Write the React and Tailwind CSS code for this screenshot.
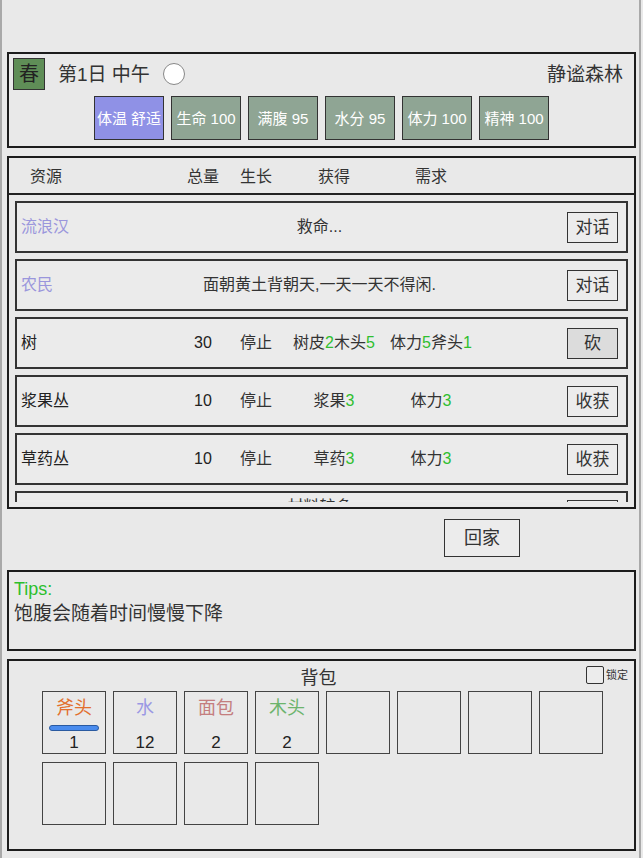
import React from 'react';

const stats = [
  { label: '体温 舒适', bg: 'bg-[#8f91e6]' },
  { label: '生命 100', bg: 'bg-[#8fa594]' },
  { label: '满腹 95', bg: 'bg-[#8fa594]' },
  { label: '水分 95', bg: 'bg-[#8fa594]' },
  { label: '体力 100', bg: 'bg-[#8fa594]' },
  { label: '精神 100', bg: 'bg-[#8fa594]' },
];

const G = ({ children }) => <span className="text-[#2fbf2f]">{children}</span>;

const resources = [
  { name: '树', qty: 30, grow: '停止', get: <>树皮<G>2</G>木头<G>5</G></>, need: <>体力<G>5</G>斧头<G>1</G></>, action: '砍', dark: true },
  { name: '浆果丛', qty: 10, grow: '停止', get: <>浆果<G>3</G></>, need: <>体力<G>3</G></>, action: '收获' },
  { name: '草药丛', qty: 10, grow: '停止', get: <>草药<G>3</G></>, need: <>体力<G>3</G></>, action: '收获' },
];

const items = [
  { name: '斧头', color: 'text-[#e2702f]', count: 1, bar: true },
  { name: '水', color: 'text-[#9a98e4]', count: 12 },
  { name: '面包', color: 'text-[#c47e7e]', count: 2 },
  { name: '木头', color: 'text-[#6db46d]', count: 2 },
];

const Btn = ({ children, dark }) => (
  <button className={`w-[51px] h-[31px] border-[1.5px] border-[#333] text-[17px] leading-none text-[#333] ${dark ? 'bg-[#dcdcdc]' : 'bg-[#ececec]'}`}>
    {children}
  </button>
);

const NpcRow = ({ name, text }) => (
  <div className="shrink-0 h-[52px] border-2 border-[#333] bg-[#ebebeb] grid grid-cols-[1fr_auto_1fr] items-center pl-[4px] pr-[8px] text-[16px]">
    <span className="text-[#9a96dc]">{name}</span>
    <span>{text}</span>
    <div className="flex justify-end">
      <Btn>对话</Btn>
    </div>
  </div>
);

const ResRow = ({ r }) => (
  <div className="shrink-0 h-[52px] border-2 border-[#333] bg-[#ebebeb] flex items-center pl-[4px] pr-[8px] text-[16px]">
    <span className="w-[162px] text-[#222]">{r.name}</span>
    <span className="w-[40px] text-center text-[#222]">{r.qty}</span>
    <span className="w-[66px] text-center">{r.grow}</span>
    <span className="w-[90px] text-center">{r.get}</span>
    <span className="w-[104px] text-center">{r.need}</span>
    <div className="flex-1 flex justify-end">
      <Btn dark={r.dark}>{r.action}</Btn>
    </div>
  </div>
);

export default function App() {
  return (
    <div className="w-[643px] h-[858px] bg-[#e9e9e9] overflow-hidden text-[#333] font-['Liberation_Sans','Noto_Sans_CJK_SC',sans-serif]">
      <div className="w-[641px] h-full border-x-2 border-[#a9a9a9] pt-[52px] pl-[5px] pr-[3px] flex flex-col">
        {/* top status */}
        <div className="h-[96px] border-2 border-[#1c1c1c] px-[4px] pt-[4px] flex flex-col">
          <div className="h-[32px] flex items-center">
            <div className="w-[32px] h-[32px] bg-[#5f8e57] border border-[#333] flex items-center justify-center text-[20px] leading-none text-[#222]">春</div>
            <span className="ml-[13px] text-[19px] leading-none">第1日 中午</span>
            <div className="ml-[13px] w-[22px] h-[22px] rounded-full bg-white border border-[#888]" />
            <span className="ml-auto mr-[7px] text-[19px] leading-none">静谧森林</span>
          </div>
          <div className="mt-[6px] flex justify-center gap-[7px]">
            {stats.map((s) => (
              <div key={s.label} className={`w-[70px] h-[44px] ${s.bg} border border-[#333] flex items-center justify-center text-white text-[15px] leading-none whitespace-nowrap`}>
                {s.label}
              </div>
            ))}
          </div>
        </div>

        {/* resources */}
        <div className="mt-[8px] h-[353px] border-2 border-[#1c1c1c] flex flex-col pb-[5px]">
          <div className="h-[37px] shrink-0 flex items-center pl-[21px] pt-[2px] text-[16px] border-b-2 border-[#222]">
            <span className="w-[153px]">资源</span>
            <span className="w-[40px] text-center">总量</span>
            <span className="w-[66px] text-center">生长</span>
            <span className="w-[90px] text-center">获得</span>
            <span className="w-[104px] text-center">需求</span>
          </div>
          <div className="h-[307px] overflow-hidden px-[6px] pt-[6px] flex flex-col gap-[6px]">
            <NpcRow name="流浪汉" text="救命..." />
            <NpcRow name="农民" text="面朝黄土背朝天,一天一天不得闲." />
            {resources.map((r) => (
              <ResRow key={r.name} r={r} />
            ))}
            <div className="shrink-0 h-[70px] border-2 border-[#333] bg-[#ebebeb] grid grid-cols-[1fr_auto_1fr] items-start pl-[4px] pr-[8px] pt-[2px] text-[16px]">
              <span />
              <span>材料较多</span>
              <div className="flex justify-end pt-[5px]">
                <Btn>对话</Btn>
              </div>
            </div>
          </div>
        </div>

        {/* go home */}
        <div className="h-[61px] flex items-start pt-[10px] pl-[437px]">
          <button className="w-[76px] h-[38px] border-[1.5px] border-[#333] bg-[#ececec] text-[18px] leading-none text-[#333]">回家</button>
        </div>

        {/* tips */}
        <div className="h-[81px] border-[2.5px] border-[#1c1c1c] pl-[5px] pt-[6px]">
          <div className="text-[18px] leading-[22px] text-[#2cbf2c]">Tips:</div>
          <div className="text-[19px] leading-[26px] mt-[1px]">饱腹会随着时间慢慢下降</div>
        </div>

        {/* backpack */}
        <div className="mt-[8px] h-[192px] border-2 border-[#1c1c1c] flex flex-col">
          <div className="h-[30px] grid grid-cols-[1fr_auto_1fr] pr-[6px]">
            <span />
            <span className="text-[18px] leading-[30px] pt-[2px]">背包</span>
            <div className="flex justify-end items-start pt-[5px] gap-[2px]">
              <div className="w-[18px] h-[18px] border-[1.5px] border-[#333] rounded-[2px] bg-[#ececec]" />
              <span className="text-[11px] leading-[18px]">锁定</span>
            </div>
          </div>
          <div className="w-[561px] ml-[33px] grid grid-cols-8 gap-x-[7px] gap-y-[8px]">
            {Array.from({ length: 12 }).map((_, i) => {
              const it = items[i];
              return (
                <div key={i} className="h-[63px] border-[1.5px] border-[#444] flex flex-col items-center">
                  {it && (
                    <>
                      <span className={`mt-[5px] text-[18px] leading-[22px] ${it.color}`}>{it.name}</span>
                      <div className={`mt-[6px] w-[50px] h-[6px] rounded-full ${it.bar ? 'bg-[#4a8cee] border border-[#2a5aa0]' : ''}`} />
                      <span className="mt-[3px] text-[17px] leading-[18px] text-[#222]">{it.count}</span>
                    </>
                  )}
                </div>
              );
            })}
          </div>
        </div>
      </div>
    </div>
  );
}
